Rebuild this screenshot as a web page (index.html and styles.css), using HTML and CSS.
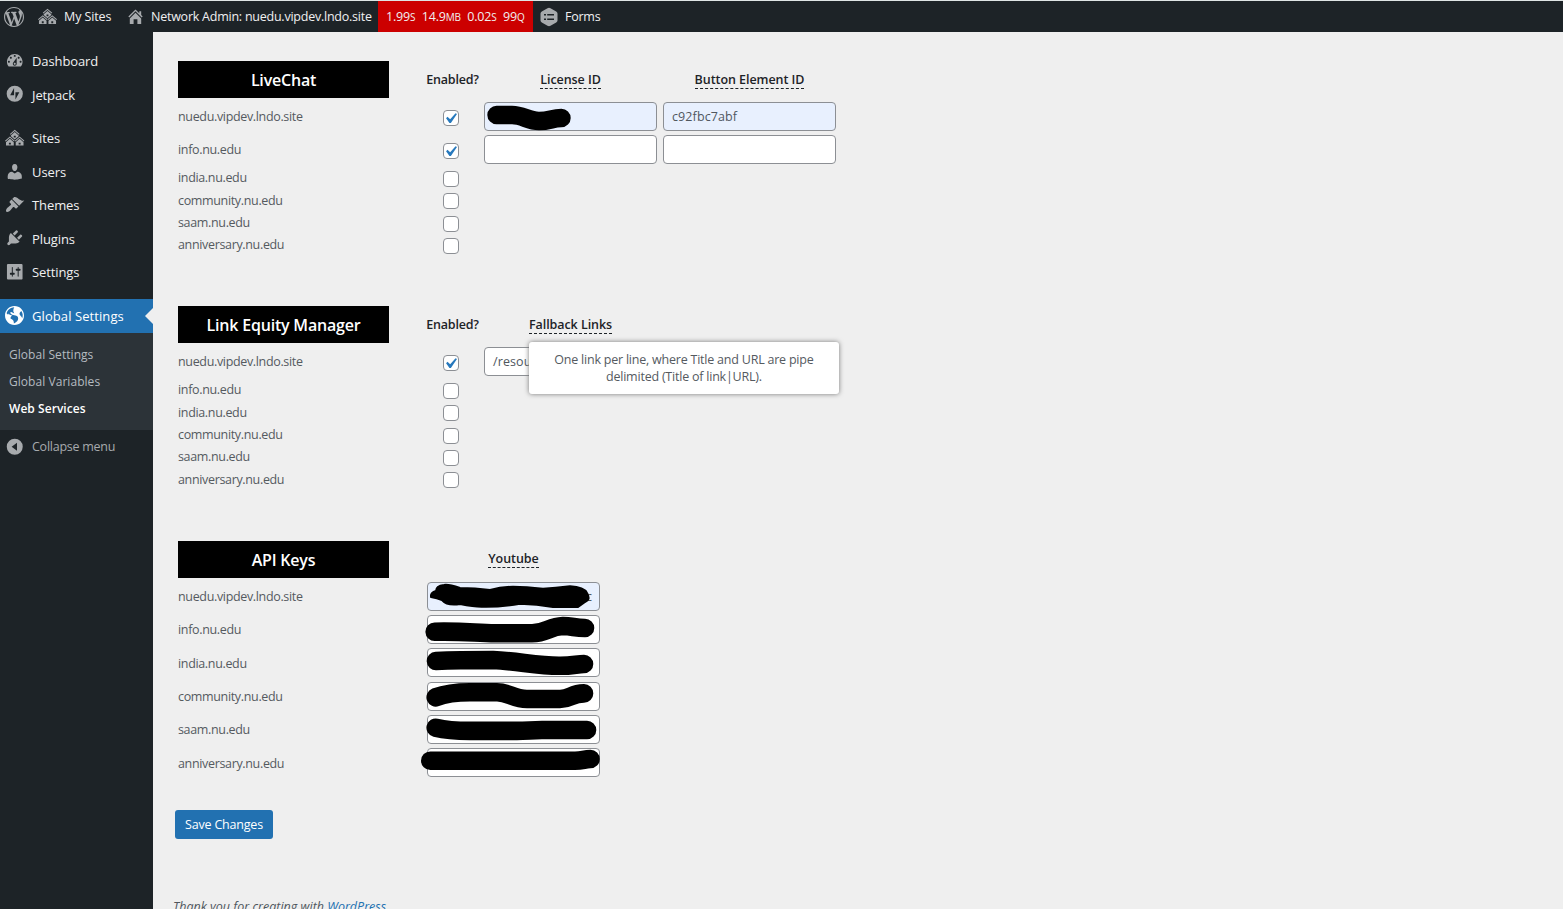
FILE: index.html
```html
<!DOCTYPE html>
<html lang="en">
<head>
<meta charset="utf-8">
<title>Web Services</title>
<link rel="stylesheet" href="styles.css">
</head>
<body>
<svg class="defs" width="0" height="0">
  <symbol id="sites" viewBox="0 0 20 20"><path fill-rule="evenodd" d="M14.27 6.87L10 3.14 5.73 6.87 5 6.14l5-4.38 5 4.38zM14 8.42l-4.05 3.43L6 8.38v-.74l4-3.5 4 3.5v.78zM11 9.7V8H9v1.7h2zm-1.73 4.03L5 10 .73 13.73 0 13l5-4.38L10 13zm10 0L15 10l-4.27 3.73L10 13l5-4.38L20 13zM5 11l4 3.5V18H1v-3.5zm10 0l4 3.5V18h-8v-3.5zm-9 6v-2H4v2h2zm10 0v-2h-2v2h2z"/></symbol>
  <symbol id="check" viewBox="0 0 20 20"><path d="M14.83 4.89l1.34.94-5.81 8.38H9.02L5.78 9.67l1.34-1.25 2.57 2.4z"/></symbol>
</svg>
<header class="bar">
  <div class="bar-item wp"><svg class="icon" viewBox="0 0 20 20"><path d="M20 10c0-5.51-4.49-10-10-10C4.48 0 0 4.49 0 10c0 5.52 4.48 10 10 10 5.51 0 10-4.48 10-10zM7.78 15.37L4.37 6.22c.55-.02 1.17-.08 1.17-.08.5-.06.44-1.13-.06-1.11 0 0-1.45.11-2.37.11-.18 0-.37 0-.58-.01C4.12 2.69 6.87 1.11 10 1.11c2.33 0 4.45.87 6.05 2.34-.68-.11-1.65.39-1.65 1.58 0 .74.45 1.36.9 2.1.35.61.55 1.36.55 2.46 0 1.49-1.4 5-1.4 5l-3.03-8.37c.54-.02.82-.17.82-.17.5-.05.44-1.25-.06-1.22 0 0-1.44.12-2.38.12-.87 0-2.33-.12-2.33-.12-.5-.03-.56 1.2-.06 1.22l.92.08 1.26 3.41zM17.41 10c.24-.64.74-1.87.43-4.25.7 1.29 1.05 2.71 1.05 4.25 0 3.29-1.73 6.24-4.4 7.78.97-2.59 1.94-5.2 2.92-7.78zM6.1 18.09C3.12 16.65 1.11 13.53 1.11 10c0-1.3.23-2.48.72-3.59C3.25 10.3 4.67 14.2 6.1 18.09zm4.03-6.63l2.58 6.98c-.86.29-1.76.45-2.71.45-.79 0-1.57-.11-2.29-.33.81-2.38 1.62-4.74 2.42-7.1z"/></svg></div>
  <div class="bar-item my-sites"><svg class="icon"><use href="#sites"/></svg><span>My Sites</span></div>
  <div class="bar-item network"><svg class="icon" viewBox="0 0 20 20"><path d="M16 8.5l1.53 1.53-1.06 1.06L10 4.6l-6.47 6.49-1.06-1.06L10 2.5l4 4v-2h2v4zm-6-2.46l6 5.99V18h-4v-5H8v5H4v-5.97z"/></svg><span>Network Admin: nuedu.vipdev.lndo.site</span></div>
  <div class="stats"><span>1.99<small>S</small></span><span>14.9<small>MB</small></span><span>0.02<small>S</small></span><span>99<small>Q</small></span></div>
  <div class="bar-item forms"><svg class="icon" viewBox="0 0 20 20"><path fill-rule="evenodd" d="M10 .8q.8 0 1.5.4l5.7 3.2q1.3.8 1.3 2v7.2q0 1.200-1.300 2l-5.700 3.200q-1.500.8-3 0l-5.700-3.200q-1.300-.8-1.300-2V6.400q0-1.200 1.300-2l5.700-3.200Q9.200.8 10 .8zM5 7v1.500h2V7zm3.200 0v1.500H15V7zM5 11.500V13h2v-1.500zm3.200 0V13H15v-1.500z"/></svg><span>Forms</span></div>
</header>
<div class="shell">
  <nav class="menu">
    <a class="item"><svg class="icon" viewBox="0 0 20 20"><path d="M3.760 16h12.480c1.100-1.370 1.760-3.110 1.760-5 0-4.420-3.580-8-8-8s-8 3.580-8 8c0 1.890.66 3.630 1.760 5zM10 4c.55 0 1 .45 1 1s-.45 1-1 1-1-.45-1-1 .45-1 1-1zM6 6c.55 0 1 .45 1 1s-.45 1-1 1-1-.45-1-1 .45-1 1-1zm8 0c.55 0 1 .45 1 1s-.45 1-1 1-1-.45-1-1 .45-1 1-1zm-5.370 5.550L12 7v6c0 1.100-.9 2-2 2s-2-.9-2-2c0-.57.24-1.080.63-1.450zM4 10c.55 0 1 .45 1 1s-.45 1-1 1-1-.45-1-1 .45-1 1-1zm12 0c.55 0 1 .45 1 1s-.45 1-1 1-1-.45-1-1 .45-1 1-1zm-5 3c0-.55-.45-1-1-1s-1 .45-1 1 .45 1 1 1 1-.45 1-1z"/></svg><span>Dashboard</span></a>
    <a class="item"><svg class="icon" viewBox="0 0 20 20"><path fill-rule="evenodd" d="M10 1.700a8.300 8.300 0 1 0 0 16.600a8.300 8.300 0 1 0 0-16.600zM9.300 4v7.500H5.300zM10.700 16V8.500h4z"/></svg><span>Jetpack</span></a>
    <a class="item group"><svg class="icon"><use href="#sites"/></svg><span>Sites</span></a>
    <a class="item"><svg class="icon" viewBox="0 0 20 20"><path d="M10 9.250c-2.270 0-2.730-3.440-2.730-3.440C7 4.020 7.820 2 9.970 2c2.160 0 2.980 2.020 2.710 3.810 0 0-.41 3.440-2.680 3.440zm0 2.570L12.720 10c2.390 0 4.520 2.330 4.520 4.530v2.490s-3.650 1.130-7.240 1.130c-3.650 0-7.240-1.130-7.240-1.130v-2.490c0-2.250 1.940-4.480 4.470-4.480z"/></svg><span>Users</span></a>
    <a class="item"><svg class="icon" viewBox="0 0 20 20"><path d="M14.480 11.060L7.410 3.990l1.500-1.500c.5-.56 2.300-.47 3.510.32 1.210.8 1.430 1.280 2.910 2.100 1.180.64 2.450 1.260 4.450.85zm-.71.71L6.700 4.700 4.930 6.470c-.39.39-.39 1.020 0 1.410l1.060 1.060c.39.39.39 1.030 0 1.420-.6.6-1.430 1.110-2.210 1.690-.35.26-.7.53-1.010.84C1.430 14.230.4 16.080 1.400 17.070c.99 1 2.840-.03 4.180-1.360.31-.31.58-.66.85-1.020.57-.78 1.080-1.610 1.690-2.210.39-.39 1.020-.39 1.410 0l1.060 1.060c.39.39 1.020.39 1.410 0z"/></svg><span>Themes</span></a>
    <a class="item"><svg class="icon" viewBox="0 0 20 20"><path d="M13.110 4.360L9.870 7.600 8 5.730l3.240-3.240c.35-.34 1.050-.2 1.560.32.52.51.66 1.210.31 1.550zm-8 1.770l.91-1.120 9.010 9.010-1.190.84c-.71.71-2.630 1.160-3.820 1.160H6.140L4.900 17.260c-.59.59-1.540.59-2.120 0-.59-.58-.59-1.530 0-2.120l1.240-1.240v-3.880c0-1.130.4-3.190 1.090-3.890zm7.260 3.970l3.240-3.240c.34-.35 1.040-.21 1.550.31.52.51.66 1.210.31 1.550l-3.240 3.250z"/></svg><span>Plugins</span></a>
    <a class="item"><svg class="icon" viewBox="0 0 20 20"><path d="M18 17V3c0-.6-.4-1-1-1H3c-.6 0-1 .4-1 1v14c0 .6.400 1 1 1h14c.6 0 1-.4 1-1zM8 11h1c.55 0 1 .45 1 1s-.45 1-1 1H8v1.500c0 .28-.22.5-.5.5s-.5-.22-.5-.5V13H6c-.55 0-1-.45-1-1s.45-1 1-1h1V5.500c0-.28.22-.5.5-.5s.5.22.5.5V11zm5-2h-1c-.55 0-1-.45-1-1s.45-1 1-1h1V5.500c0-.28.22-.5.5-.5s.5.22.5.5V7h1c.55 0 1 .45 1 1s-.45 1-1 1h-1v5.500c0 .28-.22.5-.5.5s-.5-.22-.5-.5V9z"/></svg><span>Settings</span></a>
    <a class="item group current"><svg class="icon" viewBox="0 0 18 18"><path d="M9 0C4.030 0 0 4.030 0 9s4.030 9 9 9 9-4.030 9-9-4.030-9-9-9zm3.460 11.950c0 1.470-.8 3.300-4.060 4.700.3-4.170-2.520-3.690-3.200-5 .126-1.100.804-2.063 1.800-2.550-1.552-.266-3-.96-4.180-2 .05.47.28.904.64 1.210-.782-.295-1.458-.817-1.940-1.500.977-3.225 3.883-5.482 7.250-5.630-.84 1.380-1.500 4.130 0 5.570C7.230 7 6.260 5 5.410 5.790c-1.130 1.060.33 2.510 3.420 3.080 3.290.59 3.660 1.580 3.630 3.080zm1.340-4c-.32-1.110.62-2.230 1.690-3.140 1.356 1.955 1.670 4.450.84 6.680-.77-1.890-2.170-2.320-2.530-3.570v.03z"/></svg><span>Global Settings</span></a>
    <div class="submenu"><a>Global Settings</a><a>Global Variables</a><a class="active">Web Services</a></div>
    <a class="item collapse"><svg class="icon" viewBox="0 0 20 20"><path fill-rule="evenodd" d="M10 1.800a8.200 8.200 0 1 0 0 16.400a8.200 8.200 0 1 0 0-16.400zM12.300 6v8L6.800 10z"/></svg><span>Collapse menu</span></a>
  </nav>
  <main class="content">
    <section class="service">
      <div class="row head"><h2>LiveChat</h2><b class="enabled">Enabled?</b><b class="field-name"><span class="tip">License ID</span></b><b class="field-name"><span class="tip">Button Element ID</span></b></div>
      <div class="row tall"><span class="site">nuedu.vipdev.lndo.site</span><i class="box"><svg><use href="#check"/></svg></i><div class="input filled"><svg class="ink" viewBox="0 0 173 29"><path d="M12.600 13H28C39 13 44 19 55 19S68 16 77.400 16"/></svg></div><div class="input filled">c92fbc7abf</div></div>
      <div class="row tall"><span class="site">info.nu.edu</span><i class="box"><svg><use href="#check"/></svg></i><div class="input"></div><div class="input"></div></div>
      <div class="row"><span class="site">india.nu.edu</span><i class="box"></i></div>
      <div class="row"><span class="site">community.nu.edu</span><i class="box"></i></div>
      <div class="row"><span class="site">saam.nu.edu</span><i class="box"></i></div>
      <div class="row"><span class="site">anniversary.nu.edu</span><i class="box"></i></div>
    </section>
    <section class="service equity">
      <div class="row head"><h2>Link Equity Manager</h2><b class="enabled">Enabled?</b><b class="field-name"><span class="tip">Fallback Links<span class="tooltip"><span>One link per line, where Title and URL are pipe</span><span>delimited (Title of link|URL).</span></span></span></b></div>
      <div class="row tall"><span class="site">nuedu.vipdev.lndo.site</span><i class="box"><svg><use href="#check"/></svg></i><div class="input">/resources</div></div>
      <div class="row"><span class="site">info.nu.edu</span><i class="box"></i></div>
      <div class="row"><span class="site">india.nu.edu</span><i class="box"></i></div>
      <div class="row"><span class="site">community.nu.edu</span><i class="box"></i></div>
      <div class="row"><span class="site">saam.nu.edu</span><i class="box"></i></div>
      <div class="row"><span class="site">anniversary.nu.edu</span><i class="box"></i></div>
    </section>
    <section class="service keys">
      <div class="row head"><h2>API Keys</h2><b class="field-name"><span class="tip">Youtube</span></b></div>
      <div class="row tall"><span class="site">nuedu.vipdev.lndo.site</span><div class="input filled end">c<svg class="ink" viewBox="0 0 173 29"><path class="blot" d="M4 13Q5 10 9 9Q9 4 17 3Q21 2 33 6Q48 6 63 8Q74 5 86 4.700Q99 4.700 116 6.700Q128 6 143 4.300Q157 5 160 11Q164 18 158 20L151 25H126Q110 22 93 21.700Q74 25 56 24.700Q48 25 33 22Q20 24 15 18Q10 16 4 15z"/></svg></div></div>
      <div class="row tall"><span class="site">info.nu.edu</span><div class="input"><svg class="ink" viewBox="0 0 173 29"><path d="M7.700 16.700C40 16 50 18.500 70 18.300H105C120 18 122 11.500 136 11C145 11 148 13 158 13"/></svg></div></div>
      <div class="row tall"><span class="site">india.nu.edu</span><div class="input"><svg class="ink" viewBox="0 0 173 29"><path d="M9 13C30 12 50 12 66 12C90 13 110 17.800 132 17.800C145 18 150 16 157 16"/></svg></div></div>
      <div class="row tall"><span class="site">community.nu.edu</span><div class="input"><svg class="ink" viewBox="0 0 173 29"><path d="M8.700 15.300C20 11 30 10.300 43 10.300H70C82 10.300 86 17 100 17H133C144 17 144 11.400 157 11.400"/></svg></div></div>
      <div class="row tall"><span class="site">saam.nu.edu</span><div class="input"><svg class="ink" viewBox="0 0 173 29"><path d="M8.700 12.700C20 15.500 30 15.900 43 15.900H90C100 15.900 105 15 115 15H160"/></svg></div></div>
      <div class="row tall"><span class="site">anniversary.nu.edu</span><div class="input"><svg class="ink" viewBox="0 0 173 29"><path d="M3.300 12.700H148C156 12.700 157 11 163.500 11"/></svg></div></div>
    </section>
    <button class="save">Save Changes</button>
    <footer>Thank you for creating with <a>WordPress</a></footer>
  </main>
</div>
</body>
</html>
```
FILE: styles.css
```css
* { box-sizing: border-box; }
body {
  margin: 0;
  height: 909px;
  overflow: hidden;
  background: #efefef;
  font: 12.5px/18px "Open Sans", "Noto Sans", sans-serif;
  letter-spacing: -.2px;
  color: #3c434a;
}
.defs { position: absolute; }
svg { display: block; }
.icon { width: 20px; height: 20px; fill: #a7aaad; flex: none; }

/* Admin bar */
.bar {
  display: flex;
  height: 32px;
  border-top: 1px solid #dfe5e5;
  background: #1d2327;
  color: #f0f0f1;
}
.bar-item { display: flex; align-items: center; white-space: nowrap; letter-spacing: -.24px; }
.bar-item span { padding-top: 1px; }
.wp { padding-left: 4px; width: 38px; }
.my-sites { width: 88px; gap: 7px; letter-spacing: -.1px; }
.my-sites .icon, .network .icon { width: 19px; height: 19px; }
.network { width: 252px; gap: 6px; }
.forms { padding-left: 6px; gap: 6px; }
.stats {
  display: flex;
  align-items: center;
  width: 155px;
  padding: 1px 0 0 8px;
  gap: 6.5px;
  background: #cc0000;
  white-space: nowrap;
}
.stats small { font-size: 10px; }

/* Side menu */
.shell { display: flex; height: 877px; }
.menu { width: 153px; padding-top: 12px; background: #1d2327; color: #f0f0f1; flex: none; }
.item {
  position: relative;
  display: flex;
  align-items: center;
  height: 33.4px;
  padding-left: 5px;
  gap: 7.5px;
  white-space: nowrap;
  font-size: 13px;
  letter-spacing: -.1px;
}
.item span { padding-top: 1px; }
.item .icon { width: 19.5px; height: 19.5px; }
.group { margin-top: 10.5px; }
.item.current { height: 34px; padding-left: 4.5px; background: #2271b1; color: #fff; letter-spacing: .08px; }
.item.current .icon { fill: #fff; width: 19px; height: 19px; margin-right: 1px; }
.current::after {
  content: "";
  position: absolute;
  right: 0;
  top: 9px;
  border: 8px solid transparent;
  border-left: 0;
  border-right-color: #efefef;
}
.submenu {
  display: flex;
  flex-direction: column;
  height: 97px;
  padding: 8px 9px;
  background: #2c3338;
  color: #b5bbc0;
  font-size: 12px;
  line-height: 27.3px;
  letter-spacing: .05px;
}
.submenu .active { color: #fff; font-weight: 600; }
.item.collapse { color: #a7aaad; font-size: 12.5px; letter-spacing: -.25px; padding-top: 1px; }

/* Service tables */
.content { flex: 1; padding: 29px 0 0 25px; }
.service { height: 245.3px; }
.equity { height: 234.7px; }
.keys { height: 268.7px; }
.row { display: grid; grid-template-columns: 246px 57px 179px 179px; height: 22.4px; align-items: center; }
.keys .row { grid-template-columns: 246px 179px; }
.row.tall { height: 33.3px; }
.row.head { height: 37px; margin-bottom: 2.5px; }
.row h2 {
  width: 211px;
  height: 37px;
  margin: 0;
  padding-top: 1px;
  background: #000;
  color: #fff;
  font-size: 16px;
  line-height: 36px;
  font-weight: 600;
  text-align: center;
  letter-spacing: -.2px;
}
.head b { font-weight: 600; color: #1d2327; text-align: center; white-space: nowrap; }
.head .field-name { width: 173px; margin-left: 3px; letter-spacing: -.06px; }
.tip { position: relative; display: inline-block; border-bottom: 1px dashed #1d2327; line-height: 16px; }
.site { color: #555a5f; letter-spacing: -.34px; }
.box {
  display: block;
  width: 16px;
  height: 16px;
  margin: 1px 0 0 19px;
  border: 1px solid #8c8f94;
  border-radius: 4px;
  background: #fff;
}
.box svg { width: 21px; height: 21px; margin: -3px 0 0 -4px; fill: #2779bd; }
.input {
  position: relative;
  width: 173px;
  height: 29px;
  margin: 0 0 2px 3px;
  padding: 0 8px;
  border: 1px solid #8c8f94;
  border-radius: 4px;
  background: #fff;
  line-height: 27px;
  letter-spacing: .1px;
  color: #50575e;
}
.filled { background: #e8f0fe; }
.end { text-align: right; padding-right: 7px; }
.ink {
  position: absolute;
  left: -1px;
  top: -1px;
  width: 173px;
  height: 29px;
  overflow: visible;
  fill: none;
  stroke: #000;
  stroke-width: 18.6px;
  stroke-linecap: round;
  stroke-linejoin: round;
}
.ink .blot { fill: #000; stroke-width: 2px; }
.tooltip {
  position: absolute;
  z-index: 2;
  left: 0;
  top: 25px;
  display: flex;
  flex-direction: column;
  align-items: center;
  width: 310px;
  height: 52px;
  padding-top: 9px;
  border-radius: 3px;
  background: #fff;
  box-shadow: 0 0 5px #777;
  color: #555a5f;
  font-weight: 400;
  line-height: 17.5px;
  letter-spacing: -.22px;
}
.save {
  display: block;
  width: 98px;
  height: 29px;
  margin-left: -3px;
  padding: 1px 0 0;
  border: 0;
  border-radius: 3px;
  background: #2271b1;
  color: #fff;
  font: inherit;
  letter-spacing: -.2px;
}
footer { margin: 59px 0 0 -5px; font-style: italic; color: #50575e; white-space: nowrap; letter-spacing: 0; }
footer a { color: #2271b1; }
```
